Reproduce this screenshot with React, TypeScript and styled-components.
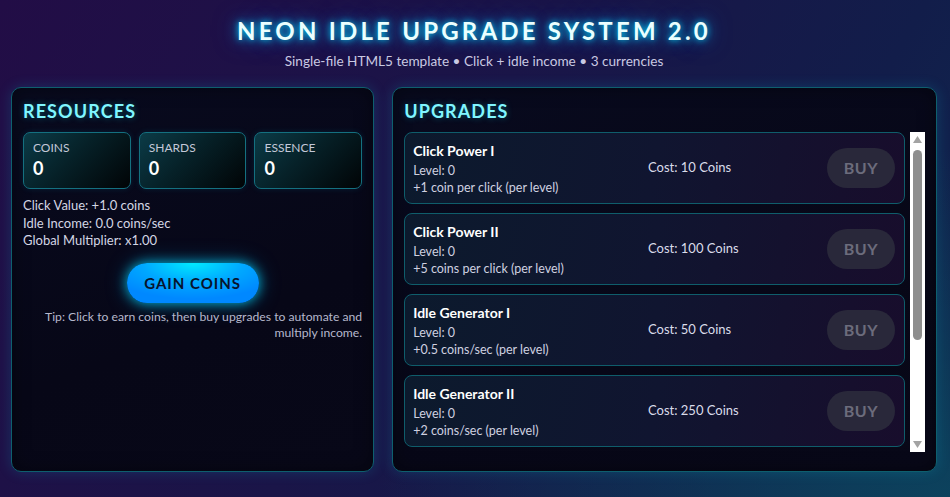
import React from "react";
import styled, { createGlobalStyle } from "styled-components";

const GlobalStyle = createGlobalStyle`
  html, body {
    margin: 0;
    padding: 0;
    height: 100%;
  }
  body {
    font-family: Lato, "Noto Sans", sans-serif;
    color: #e6e8f5;
    background:
      radial-gradient(ellipse 60% 70% at 100% 100%, rgba(12, 70, 95, 0.85) 0%, rgba(12, 70, 95, 0) 100%),
      linear-gradient(120deg, #220d46 0%, #1a1548 45%, #121d4a 75%, #0f2a50 100%);
    overflow: hidden;
  }
`;

const Page = styled.div`
  height: 497px;
  box-sizing: border-box;
  padding: 16px 13px 0 11px;
  display: flex;
  flex-direction: column;
`;

const Header = styled.header`
  text-align: center;
  display: flex;
  flex-direction: column;
  gap: 7px;
  margin-bottom: 17px;
`;

const Title = styled.h1`
  margin: 0;
  font-size: 24px;
  line-height: 29px;
  font-weight: 700;
  letter-spacing: 3.2px;
  color: #eaffff;
  text-shadow: 0 0 6px rgba(0, 229, 255, 0.9), 0 0 14px rgba(0, 170, 255, 0.7), 0 0 24px rgba(0, 140, 255, 0.5);
`;

const Subtitle = styled.p`
  margin: 0;
  font-size: 13.6px;
  line-height: 18px;
  color: #c9c9e2;
`;

const Main = styled.main`
  display: grid;
  grid-template-columns: 2fr 3fr;
  gap: 18px;
`;

const Panel = styled.section`
  height: 385px;
  box-sizing: border-box;
  padding: 12px 11px;
  border: 1px solid #0e5f6e;
  border-radius: 10px;
  background: linear-gradient(160deg, #080a1e 0%, #070717 60%, #080818 100%);
  box-shadow: 0 0 14px rgba(0, 200, 230, 0.18), inset 0 0 18px rgba(0, 0, 0, 0.4);
  display: flex;
  flex-direction: column;
`;

const PanelTitle = styled.h2`
  margin: 0 0 10px;
  font-size: 18px;
  line-height: 22px;
  font-weight: 700;
  letter-spacing: 1.1px;
  color: #80f6ff;
  text-shadow: 0 0 6px rgba(0, 229, 255, 0.35);
`;

const Cards = styled.div`
  display: grid;
  grid-template-columns: repeat(3, 1fr);
  gap: 8px;
`;

const Card = styled.div`
  border: 1px solid #147080;
  border-radius: 7px;
  padding: 7px 9px 9px;
  background: linear-gradient(135deg, #0b3b47 0%, #062128 45%, #010406 100%);
  box-shadow: 0 0 6px rgba(0, 200, 230, 0.12);
`;

const CardLabel = styled.div`
  font-size: 12px;
  line-height: 15px;
  color: #c3c8d8;
  text-transform: uppercase;
`;

const CardValue = styled.div`
  margin-top: 2px;
  font-size: 18px;
  line-height: 22px;
  font-weight: 700;
  color: #ffffff;
`;

const Stats = styled.div`
  margin-top: 8px;
  font-size: 13px;
  line-height: 17.5px;
  color: #d4d6e4;
`;

const GainButton = styled.button`
  align-self: center;
  margin-top: 13px;
  height: 40px;
  width: 132px;
  border: none;
  border-radius: 20px;
  font-family: inherit;
  font-size: 15px;
  font-weight: 700;
  letter-spacing: 1px;
  color: #07132c;
  background: radial-gradient(ellipse 70% 90% at 50% 0%, #00eaff 0%, #00a8ff 55%, #0088ff 100%);
  box-shadow: 0 0 12px rgba(0, 220, 255, 0.75), 0 0 22px rgba(0, 180, 255, 0.35);
  cursor: pointer;
`;

const Tip = styled.p`
  margin: 6px 0 0;
  text-align: right;
  font-size: 12.2px;
  line-height: 16px;
  color: #b6b8cc;
`;

const ListArea = styled.div`
  display: flex;
  gap: 5px;
  height: 320px;
`;

const List = styled.div`
  flex: 1;
  min-width: 0;
  overflow: hidden;
  display: flex;
  flex-direction: column;
  gap: 9px;
`;

const ScrollBar = styled.div`
  width: 15px;
  flex-shrink: 0;
  background: #ffffff;
  display: flex;
  flex-direction: column;
`;

const ScrollArrow = styled.div`
  height: 15px;
  display: flex;
  align-items: center;
  justify-content: center;
`;

const ScrollTrack = styled.div`
  flex: 1;
  padding: 3px 3px;
`;

const ScrollThumb = styled.div`
  height: 190px;
  border-radius: 5px;
  background: #8e8e8e;
`;

const Item = styled.div`
  flex-shrink: 0;
  box-sizing: border-box;
  height: 72px;
  border: 1px solid #0f5d6b;
  border-radius: 8px;
  padding: 8px 9px 7px 8px;
  background: linear-gradient(100deg, #0c1a2d 0%, #101530 50%, #180d2c 100%);
  display: grid;
  grid-template-columns: 1fr 169px 68px;
  column-gap: 10px;
  align-items: center;
`;

const Info = styled.div`
  display: flex;
  flex-direction: column;
`;

const ItemName = styled.div`
  font-size: 14px;
  line-height: 19px;
  font-weight: 700;
  color: #ffffff;
  margin-bottom: 2px;
`;

const ItemLine = styled.div`
  font-size: 12.5px;
  line-height: 17px;
  color: #cfd1e0;
`;

const Cost = styled.div`
  font-size: 13px;
  line-height: 17px;
  color: #dadcea;
  margin-top: -2px;
`;

const BuyButton = styled.button`
  width: 68px;
  height: 40px;
  border: none;
  border-radius: 20px;
  font-family: inherit;
  font-size: 16px;
  font-weight: 700;
  letter-spacing: 0.6px;
  color: #6c6c7c;
  background: #29283a;
  margin-top: -2px;
  cursor: not-allowed;
`;

const Arrow = ({ down }: { down?: boolean }) => (
  <svg width="9" height="7" viewBox="0 0 9 7">
    <polygon points={down ? "0,0 9,0 4.5,7" : "4.5,0 9,7 0,7"} fill="#a3a3a3" />
  </svg>
);

const resources = [
  { label: "Coins", value: "0" },
  { label: "Shards", value: "0" },
  { label: "Essence", value: "0" },
];

const upgrades = [
  { name: "Click Power I", cost: "10 Coins", desc: "+1 coin per click (per level)" },
  { name: "Click Power II", cost: "100 Coins", desc: "+5 coins per click (per level)" },
  { name: "Idle Generator I", cost: "50 Coins", desc: "+0.5 coins/sec (per level)" },
  { name: "Idle Generator II", cost: "250 Coins", desc: "+2 coins/sec (per level)" },
];

export default function App() {
  return (
    <>
      <GlobalStyle />
      <Page>
        <Header>
          <Title>NEON IDLE UPGRADE SYSTEM 2.0</Title>
          <Subtitle>Single-file HTML5 template • Click + idle income • 3 currencies</Subtitle>
        </Header>
        <Main>
          <Panel>
            <PanelTitle>RESOURCES</PanelTitle>
            <Cards>
              {resources.map((r) => (
                <Card key={r.label}>
                  <CardLabel>{r.label}</CardLabel>
                  <CardValue>{r.value}</CardValue>
                </Card>
              ))}
            </Cards>
            <Stats>
              <div>Click Value: +1.0 coins</div>
              <div>Idle Income: 0.0 coins/sec</div>
              <div>Global Multiplier: x1.00</div>
            </Stats>
            <GainButton>GAIN COINS</GainButton>
            <Tip>Tip: Click to earn coins, then buy upgrades to automate and multiply income.</Tip>
          </Panel>
          <Panel>
            <PanelTitle>UPGRADES</PanelTitle>
            <ListArea>
              <List>
                {upgrades.map((u) => (
                  <Item key={u.name}>
                    <Info>
                      <ItemName>{u.name}</ItemName>
                      <ItemLine>Level: 0</ItemLine>
                      <ItemLine>{u.desc}</ItemLine>
                    </Info>
                    <Cost>Cost: {u.cost}</Cost>
                    <BuyButton disabled>BUY</BuyButton>
                  </Item>
                ))}
              </List>
              <ScrollBar>
                <ScrollArrow>
                  <Arrow />
                </ScrollArrow>
                <ScrollTrack>
                  <ScrollThumb />
                </ScrollTrack>
                <ScrollArrow>
                  <Arrow down />
                </ScrollArrow>
              </ScrollBar>
            </ListArea>
          </Panel>
        </Main>
      </Page>
    </>
  );
}
